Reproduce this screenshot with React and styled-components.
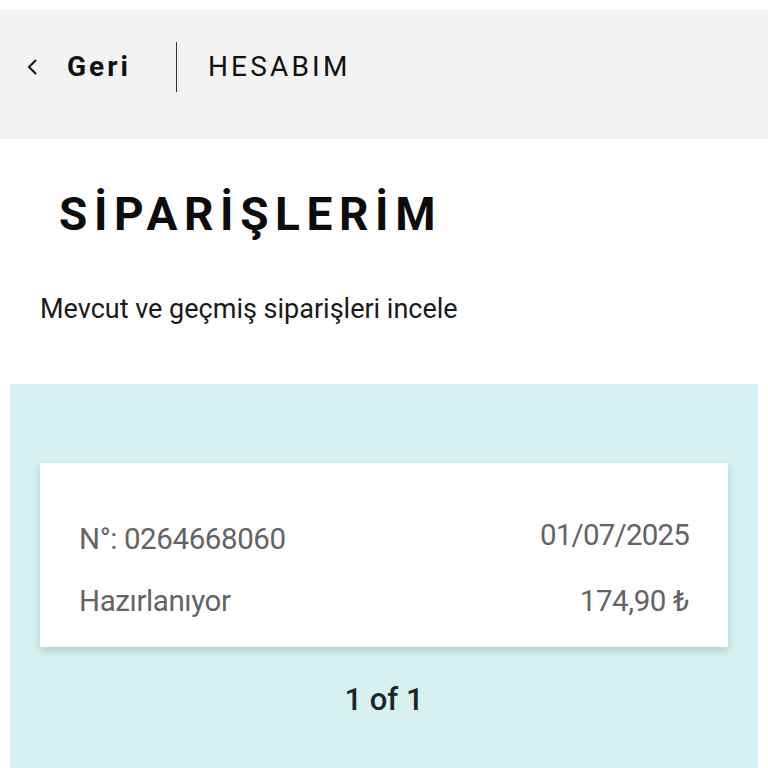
import React from 'react'
import styled, { createGlobalStyle } from 'styled-components'

const GlobalStyle = createGlobalStyle`
  body {
    margin: 0;
    background: #ffffff;
    font-family: Roboto, "Noto Sans", sans-serif;
  }
`;

const Page = styled.div`
  padding-top: 10px;
  height: 768px;
  box-sizing: border-box;
  overflow: hidden;
  display: flex;
  flex-direction: column;
`;

const Header = styled.header`
  height: 129px;
  flex-shrink: 0;
  background: #f3f3f3;
  display: flex;
  align-items: center;
  padding: 0 0 16px 25px;
  box-sizing: border-box;
`;

const BackLink = styled.a`
  display: flex;
  align-items: center;
  gap: 28px;
  color: #111;
  font-size: 28px;
  font-weight: 700;
  letter-spacing: 3px;
  text-decoration: none;
  padding-right: 45px;
`;

const Divider = styled.span`
  width: 1px;
  height: 50px;
  background: #333;
`;

const Crumb = styled.span`
  margin-left: 31px;
  font-size: 28px;
  letter-spacing: 3.2px;
  color: #111;
`;

const Title = styled.h1`
  margin: 48px 0 0 59px;
  font-size: 46px;
  font-weight: 700;
  letter-spacing: 6.6px;
  color: #0c0c0c;
`;

const Subtitle = styled.p`
  margin: 52px 0 0 40px;
  font-size: 27px;
  color: #1a1a1a;
`;

const Panel = styled.section`
  flex: 1;
  margin: 59px 10px 0;
  background: #d7f1f1;
  padding: 79px 30px 0;
`;

const Card = styled.div`
  background: #fff;
  height: 184px;
  box-sizing: border-box;
  padding: 57px 39px 0 39px;
  box-shadow: 0 4px 8px rgba(0, 60, 60, 0.18);
  display: flex;
  flex-direction: column;
  gap: 24px;
`;

const Row = styled.div`
  display: flex;
  justify-content: space-between;
  align-items: ${p => (p.top ? 'flex-start' : 'center')};
  color: #646464;
  font-size: 29.5px;
  letter-spacing: -0.4px;
  line-height: 38px;
`;

const Date = styled.span`
  margin-top: -4px;
  letter-spacing: -0.8px;
`;

const Pager = styled.div`
  text-align: center;
  margin-top: 34px;
  font-size: 31px;
  font-weight: 500;
  color: #1b2626;
`;

export default function App() {
  return (
    <Page>
      <GlobalStyle />
      <Header>
        <BackLink href="#">
          <svg width="14" height="22" viewBox="0 0 14 22" fill="none">
            <path d="M11 4 L4 11 L11 18" stroke="#111" strokeWidth="2" />
          </svg>
          Geri
        </BackLink>
        <Divider />
        <Crumb>HESABIM</Crumb>
      </Header>
      <Title>SİPARİŞLERİM</Title>
      <Subtitle>Mevcut ve geçmiş siparişleri incele</Subtitle>
      <Panel>
        <Card>
          <Row top>
            <span>N°: 0264668060</span>
            <Date>01/07/2025</Date>
          </Row>
          <Row>
            <span>Hazırlanıyor</span>
            <span>174,90 ₺</span>
          </Row>
        </Card>
        <Pager>1 of 1</Pager>
      </Panel>
    </Page>
  )
}
